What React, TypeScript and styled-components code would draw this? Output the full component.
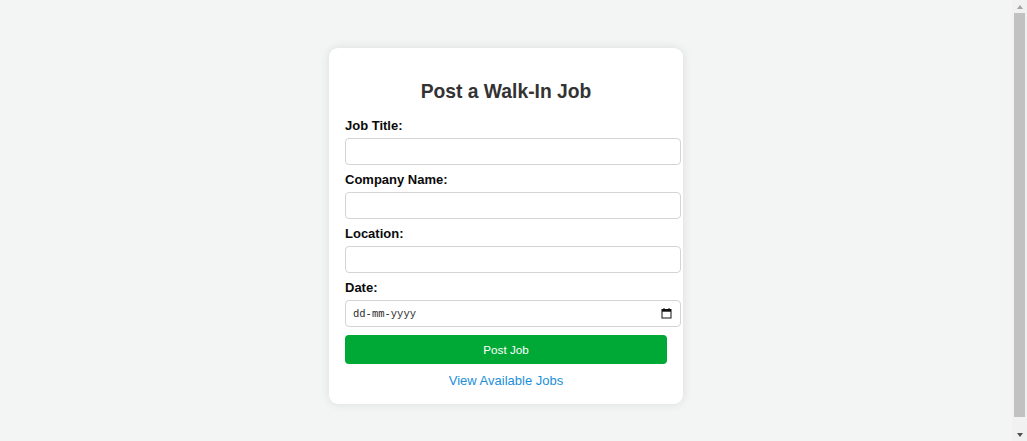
import React from "react";
import styled, { createGlobalStyle } from "styled-components";

const GlobalStyle = createGlobalStyle`
  html, body {
    margin: 0;
    padding: 0;
    background: #f3f4f4;
    font-family: "Liberation Sans", Arial, Helvetica, sans-serif;
    overflow: hidden;
  }
  * { box-sizing: border-box; }
`;

const Shell = styled.div`
  display: flex;
  height: 100vh;
`;

const Main = styled.main`
  flex: 1;
  padding-top: 48px;
`;

const Rail = styled.div`
  width: 15px;
  height: 100%;
  background: #f1f1f1;
  display: flex;
  flex-direction: column;
  align-items: center;
`;

const RailButton = styled.div<{ $dir: "up" | "down" }>`
  height: 13px;
  width: 100%;
  display: flex;
  align-items: center;
  justify-content: center;
  &::before {
    content: "";
    width: 0;
    height: 0;
    border-left: 3.5px solid transparent;
    border-right: 3.5px solid transparent;
    ${(p) =>
      p.$dir === "up"
        ? "border-bottom: 4px solid #a3a3a3;"
        : "border-top: 4px solid #505050;"}
  }
`;

const RailTrack = styled.div`
  flex: 1;
  width: 100%;
  padding: 0 2px 11px;
  display: flex;
`;

const RailThumb = styled.div`
  flex: 1;
  background: #c1c1c1;
`;

const Card = styled.div`
  width: 354px;
  margin: 0 auto;
  background: #ffffff;
  border-radius: 9px;
  box-shadow: 0 0 10px rgba(0, 0, 0, 0.1);
  padding: 33px 16px 15px;
`;

const Title = styled.h2`
  margin: 0 0 14px;
  font-size: 19.3px;
  line-height: 22px;
  font-weight: bold;
  color: #333333;
  text-align: center;
`;

const Form = styled.form`
  display: flex;
  flex-direction: column;
  align-items: flex-start;
`;

const Label = styled.label`
  display: block;
  font-size: 13px;
  line-height: 17px;
  font-weight: bold;
  color: #0a0a0a;
  margin-bottom: 4px;
`;

const fieldBox = `
  width: 336px;
  height: 27px;
  margin: 0 0 6px;
  border: 1px solid #d4d4d4;
  border-radius: 4px;
  background: #ffffff;
`;

const TextInput = styled.input`
  ${fieldBox}
  padding: 0 6px;
  font-family: "Liberation Sans", Arial, sans-serif;
  font-size: 13px;
  color: #222;
  outline: none;
`;

const DateField = styled.div`
  ${fieldBox}
  display: flex;
  align-items: center;
  justify-content: space-between;
  padding: 0 8px 0 7px;
`;

const DateText = styled.span`
  font-family: "Liberation Mono", "DejaVu Sans Mono", monospace;
  font-size: 10.5px;
  color: #2b2b2b;
`;

const SubmitButton = styled.button`
  width: 322px;
  height: 29px;
  margin-top: 2px;
  border: none;
  border-radius: 4px;
  background: #00a836;
  color: #ffffff;
  font-family: "Liberation Sans", Arial, sans-serif;
  font-size: 11.7px;
  cursor: pointer;
`;

const LinkRow = styled.div`
  align-self: stretch;
  margin-top: 8px;
  text-align: center;
  line-height: 16px;
`;

const JobsLink = styled.a`
  color: #1b8fd9;
  font-size: 13px;
  text-decoration: none;
`;

const CalendarIcon = () => (
  <svg width="11" height="11" viewBox="0 0 11 11" aria-hidden="true">
    <rect x="1" y="1.5" width="9" height="8.5" fill="none" stroke="#111" strokeWidth="1" />
    <rect x="1" y="1.5" width="9" height="2.2" fill="#111" />
    <rect x="2.5" y="0" width="1" height="2" fill="#111" />
    <rect x="7.5" y="0" width="1" height="2" fill="#111" />
  </svg>
);

export default function App() {
  return (
    <>
      <GlobalStyle />
      <Shell>
        <Main>
          <Card>
            <Title>Post a Walk-In Job</Title>
            <Form onSubmit={(e) => e.preventDefault()}>
              <Label htmlFor="title">Job Title:</Label>
              <TextInput id="title" type="text" />
              <Label htmlFor="company">Company Name:</Label>
              <TextInput id="company" type="text" />
              <Label htmlFor="location">Location:</Label>
              <TextInput id="location" type="text" />
              <Label>Date:</Label>
              <DateField>
                <DateText>dd-mm-yyyy</DateText>
                <CalendarIcon />
              </DateField>
              <SubmitButton type="submit">Post Job</SubmitButton>
              <LinkRow>
                <JobsLink href="#">View Available Jobs</JobsLink>
              </LinkRow>
            </Form>
          </Card>
        </Main>
        <Rail aria-hidden="true">
          <RailButton $dir="up" />
          <RailTrack>
            <RailThumb />
          </RailTrack>
          <RailButton $dir="down" />
        </Rail>
      </Shell>
    </>
  );
}
